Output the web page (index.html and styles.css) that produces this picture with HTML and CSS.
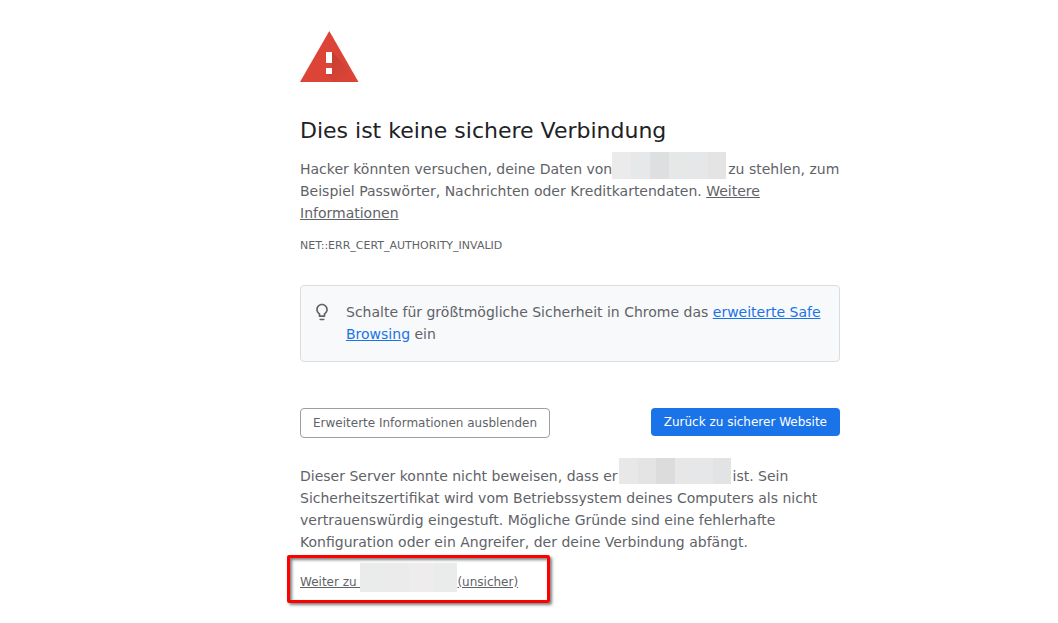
FILE: index.html
```html
<!DOCTYPE html>
<html lang="de">
<head>
<meta charset="utf-8">
<meta name="viewport" content="width=device-width, initial-scale=1">
<title>Datenschutzfehler</title>
<link rel="stylesheet" href="styles.css">
</head>
<body>
<main class="interstitial">
  <svg class="warning-icon" viewBox="0 0 60 54" aria-hidden="true">
    <defs>
      <linearGradient id="shade" gradientUnits="userSpaceOnUse" x1="28" y1="28" x2="46" y2="46">
        <stop offset="0" stop-color="#b93a30" stop-opacity=".75"/>
        <stop offset="1" stop-color="#c53d32" stop-opacity="0.1"/>
      </linearGradient>
    </defs>
    <path fill="#db4437" d="M29.300 1 58.500 52H0z"/>
    <path fill="url(#shade)" d="M32 22 46 36 54 52H34L26 44l6-6z"/>
    <path fill="#fff" d="M26 22h6v11h-6zM26 38h6v6h-6z"/>
  </svg>
  <h1 class="title">Dies ist keine sichere Verbindung</h1>
  <p class="text">Hacker könnten versuchen, deine Daten von<span class="redacted redacted-intro"></span>zu stehlen, zum Beispiel Passwörter, Nachrichten oder Kreditkartendaten. <a class="link" href="#">Weitere Informationen</a></p>
  <p class="error-code">NET::ERR_CERT_AUTHORITY_INVALID</p>
  <section class="hint">
    <svg class="hint-icon" viewBox="0 0 24 24" aria-hidden="true">
      <path fill="#5f6368" d="M9 21c0 .5.4 1 1 1h4c.6 0 1-.5 1-1v-1H9v1zm3-19C8.100 2 5 5.100 5 9c0 2.400 1.200 4.500 3 5.700V17c0 .5.4 1 1 1h6c.6 0 1-.5 1-1v-2.300c1.800-1.300 3-3.400 3-5.700 0-3.900-3.100-7-7-7zm2.900 11.100l-.9.600V16h-4v-2.300l-.9-.6C7.800 12.200 7 10.600 7 9c0-2.800 2.200-5 5-5s5 2.200 5 5c0 1.600-.8 3.200-2.100 4.100z"/>
    </svg>
    <p class="hint-text">Schalte für größtmögliche Sicherheit in Chrome das <a class="link-blue" href="#">erweiterte Safe Browsing</a> ein</p>
  </section>
  <div class="actions">
    <button class="button button-secondary" type="button">Erweiterte Informationen ausblenden</button>
    <button class="button button-primary" type="button">Zurück zu sicherer Website</button>
  </div>
  <p class="text">Dieser Server konnte nicht beweisen, dass er<span class="redacted redacted-details"></span>ist. Sein Sicherheitszertifikat wird vom Betriebssystem deines Computers als nicht vertrauenswürdig eingestuft. Mögliche Gründe sind eine fehlerhafte Konfiguration oder ein Angreifer, der deine Verbindung abfängt.</p>
  <div class="proceed"><a class="link" href="#">Weiter zu <span class="redacted redacted-proceed"></span>(unsicher)</a></div>
</main>
</body>
</html>
```
FILE: styles.css
```css
* {
  box-sizing: border-box;
}

body {
  margin: 0;
  padding: 30px 0 16px 82px;
  background: #fff;
  color: #5f6368;
  font-family: "DejaVu Sans", sans-serif;
  font-size: 14px;
  line-height: 22px;
}

.interstitial {
  max-width: 540px;
  margin: 0 auto;
}

.warning-icon {
  display: block;
  width: 60px;
  height: 54px;
}

.title {
  margin: 33px 0 13px;
  color: #202124;
  font-size: 22px;
  font-weight: 400;
  line-height: 28px;
}

.text,
.hint-text {
  margin: 0;
}

.link {
  color: inherit;
}

.link-blue {
  color: #1a73e8;
}

.error-code {
  margin: 13px 0 0;
  font-size: 11px;
  line-height: 18px;
}

.redacted {
  display: inline-block;
  height: 27px;
  margin: -14px 2px 0 0;
  vertical-align: -5px;
}

.redacted-intro {
  width: 114px;
  background: linear-gradient(90deg, #ebebeb 0 17%, #e7e8e9 17% 33%, #dedfe0 33% 50%, #e6e7e7 50% 67%, #e6e7e9 67% 84%, #e4e4e4 84%);
}

.redacted-details {
  width: 112px;
  height: 26px;
  margin-left: 1px;
  vertical-align: -3px;
  background: linear-gradient(90deg, #e8e8e8 0 17%, #e4e4e4 17% 33%, #dcdcdc 33% 50%, #e6e7e6 50% 67%, #e6e7e9 67% 84%, #e2e3e5 84%);
}

.redacted-proceed {
  width: 97px;
  height: 29px;
  margin: -14px 0 -6px;
  vertical-align: 0;
  background: linear-gradient(90deg, #eaeceb 0 23%, #ebebeb 23% 51%, #eeecec 51% 76%, #eaeceb 76%);
}

.hint {
  display: flex;
  gap: 14px;
  margin-top: 30px;
  padding: 15px 11px 16px;
  border: 1px solid #dadce0;
  border-radius: 4px;
  background: #f8f9fa;
}

.hint-icon {
  flex: none;
  width: 20px;
  height: 20px;
  margin-top: 1px;
}

.actions {
  display: flex;
  flex-wrap: wrap;
  justify-content: space-between;
  align-items: flex-start;
  gap: 12px;
  margin: 46px 0 27px;
}

.button {
  padding: 6px 13px;
  border: 0;
  border-radius: 4px;
  font-family: inherit;
  font-size: 12px;
  line-height: 16px;
  cursor: pointer;
}

.button-secondary {
  padding: 6px 12px;
  border: 1px solid #9aa0a6;
  background: #fff;
  color: #5f6368;
}

.button-primary {
  background: #1a73e8;
  color: #fff;
}

.proceed {
  width: 263px;
  margin: 2px 0 0 -13px;
  padding: 15px 10px 9px;
  border: 3px solid #f00;
  border-radius: 2px;
  box-shadow: 2px 2px 3px rgba(0, 0, 0, .5), inset 2px 2px 3px rgba(0, 0, 0, .5);
  font-size: 12px;
  line-height: 18px;
}
```
